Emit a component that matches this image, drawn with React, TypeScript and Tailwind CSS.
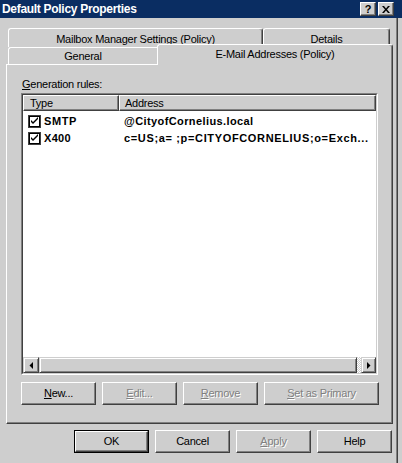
import React from "react";

function Check() {
  return (
    <svg width="13" height="13" viewBox="0 0 13 13" className="shrink-0">
      <rect x="0" y="0" width="13" height="13" fill="#404040" />
      <rect x="1" y="1" width="11" height="11" fill="#000" />
      <rect x="2" y="2" width="9" height="9" fill="#fff" />
      <path d="M3 5 L3 7 L5 9 L10 4 L10 2 L5 7 Z" fill="#000" />
    </svg>
  );
}

function Arrow({ dir }: { dir: "left" | "right" }) {
  return (
    <svg width="4" height="7" viewBox="0 0 4 7">
      {dir === "left" ? <path d="M4 0 L4 7 L0.5 3.5 Z" fill="#000" /> : <path d="M0 0 L0 7 L3.5 3.5 Z" fill="#000" />}
    </svg>
  );
}

function Btn({ children, w, disabled, def }: { children: React.ReactNode; w: string; disabled?: boolean; def?: boolean }) {
  const inner = (
    <div className="flex-1 h-full border border-t-white border-l-white border-r-[#404040] border-b-[#404040] shadow-[inset_-1px_-1px_0_#808080] flex items-center justify-center">
      <span className={disabled ? "text-[#808080] [text-shadow:1px_1px_0_#ffffff]" : "text-black"}>{children}</span>
    </div>
  );
  return (
    <div className={`${w} h-[23px] flex ${def ? "border border-black" : ""}`}>{inner}</div>
  );
}

export default function App() {
  return (
    <div className="w-[402px] h-[463px] bg-[#cecece] flex flex-col overflow-hidden font-['Liberation_Sans',Arial,sans-serif] text-[11px] leading-[13px] tracking-[-0.25px] text-black select-none">
      {/* Title bar */}
      <div className="h-[18px] shrink-0 bg-[#0a2d62] flex items-center pl-[2px] pr-[8px]">
        <span className="text-white font-bold text-[12px] tracking-[-0.3px] flex-1">Default Policy Properties</span>
        <div className="flex gap-[2px]">
          <div className="w-[16px] h-[14px] bg-[#cecece] border border-t-white border-l-white border-r-[#404040] border-b-[#404040] shadow-[inset_-1px_-1px_0_#808080] flex items-center justify-center">
            <span className="font-bold text-[11px] leading-none tracking-normal">?</span>
          </div>
          <div className="w-[16px] h-[14px] bg-[#cecece] border border-t-white border-l-white border-r-[#404040] border-b-[#404040] shadow-[inset_-1px_-1px_0_#808080] flex items-center justify-center">
            <svg width="8" height="7" viewBox="0 0 8 7">
              <path d="M0 0 L2 0 L4 2.5 L6 0 L8 0 L5 3.5 L8 7 L6 7 L4 4.5 L2 7 L0 7 L3 3.5 Z" fill="#000" />
            </svg>
          </div>
        </div>
      </div>

      <div className="flex flex-1">
        <div className="w-[396px] pl-[6px] pt-[10px] flex flex-col">
          {/* Tab row 1 */}
          <div className="flex h-[18px] pl-[2px]">
            <div className="w-[255px] h-[19px] border-l border-t border-r border-l-white border-t-white border-r-[#404040] rounded-t-[3px] shadow-[inset_-1px_0_0_#808080] flex items-center justify-center pt-[2px]">
              Mailbox Manager Settings (Policy)
            </div>
            <div className="w-[127px] h-[19px] border-l border-t border-r border-l-white border-t-white border-r-[#404040] rounded-t-[3px] shadow-[inset_-1px_0_0_#808080] flex items-center justify-center pt-[2px]">
              Details
            </div>
          </div>
          {/* Tab row 2 */}
          <div className="flex h-[18px] pl-[2px] items-end">
            <div className="w-[149px] h-[17px] bg-[#cecece] border-l border-t border-l-white border-t-white rounded-tl-[3px] flex items-center justify-center">
              General
            </div>
            <div className="relative z-10 w-[236px] h-[21px] mb-[-1px] bg-[#cecece] border-l border-t border-r border-l-white border-t-white border-r-[#404040] rounded-t-[3px] shadow-[inset_-1px_0_0_#808080] flex items-center justify-center pb-[1px]">
              E-Mail Addresses (Policy)
            </div>
          </div>

          {/* Panel */}
          <div className="w-[387px] h-[360px] border border-t-white border-l-white border-r-[#404040] border-b-[#404040] shadow-[inset_-1px_-1px_0_#808080] pl-[14px] pt-[13px] flex flex-col">
            <div className="h-[13px] pl-[1px]">
              <span className="underline underline-offset-[1px]">G</span>eneration rules:
            </div>
            {/* List view */}
            <div className="mt-[2px] w-[357px] h-[282px] border border-t-[#808080] border-l-[#808080] border-r-white border-b-white flex">
              <div className="flex-1 border border-t-[#404040] border-l-[#404040] border-r-[#cecece] border-b-[#cecece] bg-white flex flex-col">
                {/* header */}
                <div className="h-[16px] flex shrink-0">
                  <div className="w-[96px] bg-[#cecece] border border-t-white border-l-white border-r-[#404040] border-b-[#404040] shadow-[inset_-1px_-1px_0_#808080] pl-[6px] flex items-center">
                    Type
                  </div>
                  <div className="flex-1 bg-[#cecece] border border-t-white border-l-white border-r-[#404040] border-b-[#404040] shadow-[inset_-1px_-1px_0_#808080] pl-[5px] flex items-center">
                    Address
                  </div>
                </div>
                {/* rows */}
                <div className="flex-1 pt-[2px] flex flex-col">
                  <div className="h-[17px] flex items-center">
                    <div className="w-[101px] flex items-center pl-[5px] gap-[3px]">
                      <Check />
                      <span className="font-bold tracking-[0.6px]">SMTP</span>
                    </div>
                    <span className="font-bold tracking-[0.4px]">@CityofCornelius.local</span>
                  </div>
                  <div className="h-[17px] flex items-center">
                    <div className="w-[101px] flex items-center pl-[5px] gap-[3px]">
                      <Check />
                      <span className="font-bold tracking-[0.3px]">X400</span>
                    </div>
                    <span className="font-bold whitespace-nowrap tracking-[0.65px]">c=US;a= ;p=CITYOFCORNELIUS;o=Exch...</span>
                  </div>
                </div>
                {/* horizontal scrollbar */}
                <div className="h-[16px] flex shrink-0">
                  <div className="w-[16px] h-full bg-[#cecece] border border-t-[#cecece] border-l-[#cecece] border-r-[#404040] border-b-[#404040] shadow-[inset_1px_1px_0_#ffffff,inset_-1px_-1px_0_#808080] flex items-center justify-center">
                    <Arrow dir="left" />
                  </div>
                  <div className="w-[318px] h-full bg-[#cecece] border border-t-[#cecece] border-l-[#cecece] border-r-[#404040] border-b-[#404040] shadow-[inset_1px_1px_0_#ffffff,inset_-1px_-1px_0_#808080]" />
                  <div className="w-[4px] h-full bg-[repeating-conic-gradient(#ffffff_0_25%,#cecece_0_50%)] bg-[length:2px_2px]" />
                  <div className="w-[15px] h-full bg-[#cecece] border border-t-[#cecece] border-l-[#cecece] border-r-[#404040] border-b-[#404040] shadow-[inset_1px_1px_0_#ffffff,inset_-1px_-1px_0_#808080] flex items-center justify-center">
                    <Arrow dir="right" />
                  </div>
                </div>
              </div>
            </div>
            {/* list buttons */}
            <div className="mt-[7px] flex gap-[6px]">
              <Btn w="w-[75px]">
                <span className="underline underline-offset-[1px]">N</span>ew...
              </Btn>
              <Btn w="w-[75px]" disabled>
                <span className="underline underline-offset-[1px]">E</span>dit...
              </Btn>
              <Btn w="w-[75px]" disabled>
                <span className="underline underline-offset-[1px]">R</span>emove
              </Btn>
              <Btn w="w-[115px]" disabled>
                <span className="underline underline-offset-[1px]">S</span>et as Primary
              </Btn>
            </div>
          </div>

          {/* dialog buttons */}
          <div className="w-[387px] mt-[6px] pr-[1px] flex justify-end gap-[6px]">
            <Btn w="w-[75px]" def>OK</Btn>
            <Btn w="w-[75px]">Cancel</Btn>
            <Btn w="w-[75px]" disabled>
              <span className="underline underline-offset-[1px]">A</span>pply
            </Btn>
            <Btn w="w-[75px]">Help</Btn>
          </div>
        </div>
        {/* window frame right */}
        <div className="w-[1px] bg-[#808080]" />
        <div className="w-[1px] bg-[#404040]" />
        <div className="flex-1" />
      </div>
    </div>
  );
}
